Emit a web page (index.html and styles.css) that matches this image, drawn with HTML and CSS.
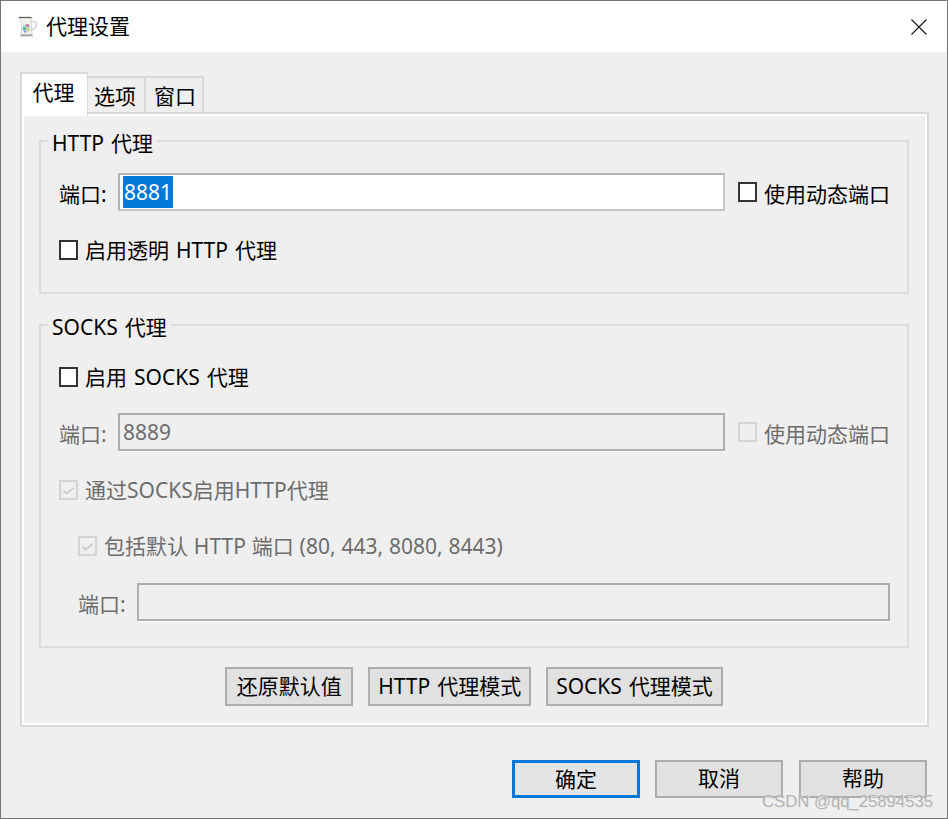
FILE: index.html
```html
<!DOCTYPE html>
<html lang="zh">
<head>
<meta charset="utf-8">
<title>代理设置</title>
<link rel="stylesheet" href="styles.css">
</head>
<body>
<div class="window">
  <header class="titlebar">
    <svg class="app-icon" viewBox="0 0 21 22" aria-hidden="true">
      <path d="M14 6c3-1.500 5.500-.5 5.500 2 0 3-3 5.500-6 7" fill="none" stroke="#d4d4d0" stroke-width="1.600"/>
      <path d="M2 1.500h12.500l-.5 4 1 13H4l1-11z" fill="#f4f4f0" stroke="#c4c4be" stroke-width=".7"/>
      <path d="M2 1.500h12.500" stroke="#5c5c56" stroke-width="1.300"/>
      <path d="M5.500 9.500l3-2 4 .5 1 6-3 3-4-1z" fill="#bfe3d8"/>
      <circle cx="10.500" cy="9.500" r="1.500" fill="#e0689a"/>
      <circle cx="7.500" cy="12.500" r="1.700" fill="#5fb08c"/>
      <circle cx="11" cy="14" r="1.300" fill="#e8cf5c"/>
      <circle cx="8" cy="15.500" r="1" fill="#6f8fd0"/>
      <path d="M4 18.500h11l1 1.500H3z" fill="#a8a8a2"/>
      <path d="M3 20.500h13" stroke="#dcdcd8" stroke-width="1"/>
    </svg>
    <span class="title-text">代理设置</span>
    <svg class="close-icon" viewBox="0 0 16 16" aria-hidden="true"><path d="M.5.500l15 15M15.500.500l-15 15" stroke="#111" stroke-width="1.100" fill="none"/></svg>
  </header>

  <main class="content">
    <div class="tabs">
      <div class="tab tab-active">代理</div>
      <div class="tab tab-mid">选项</div>
      <div class="tab tab-end">窗口</div>
    </div>
    <section class="pane">
      <fieldset class="group group-http">
        <legend>HTTP 代理</legend>
        <div class="row">
          <span class="label">端口:</span>
          <div class="input"><span class="selected">8881</span></div>
          <label class="check check-trail"><span class="box"></span>使用动态端口</label>
        </div>
        <div class="row row-after-input">
          <label class="check check-lead"><span class="box"></span>启用透明 HTTP 代理</label>
        </div>
      </fieldset>

      <fieldset class="group group-socks">
        <legend>SOCKS 代理</legend>
        <div class="row">
          <label class="check check-lead"><span class="box"></span>启用 SOCKS 代理</label>
        </div>
        <div class="row row-gap disabled">
          <span class="label">端口:</span>
          <div class="input input-off">8889</div>
          <label class="check check-trail"><span class="box box-off"></span>使用动态端口</label>
        </div>
        <div class="row row-after-input disabled">
          <label class="check check-lead"><span class="box box-off"><svg viewBox="0 0 15 15" class="tick"><path d="M2.500 8l3 3 7-5.500" fill="none" stroke="#c4c4c4" stroke-width="1.500"/></svg></span>通过SOCKS启用HTTP代理</label>
        </div>
        <div class="row row-next row-indent row-ports disabled">
          <label class="check check-lead"><span class="box box-off"><svg viewBox="0 0 15 15" class="tick"><path d="M2.500 8l3 3 7-5.500" fill="none" stroke="#c4c4c4" stroke-width="1.500"/></svg></span>包括默认 HTTP 端口 (80, 443, 8080, 8443)</label>
        </div>
        <div class="row row-next row-indent disabled">
          <span class="label">端口:</span>
          <div class="input input-off"></div>
        </div>
      </fieldset>

      <div class="pane-actions">
        <button class="btn btn-reset" type="button">还原默认值</button>
        <button class="btn" type="button">HTTP 代理模式</button>
        <button class="btn" type="button">SOCKS 代理模式</button>
      </div>
    </section>

    <footer class="dialog-actions">
      <button class="btn btn-wide btn-default" type="button">确定</button>
      <button class="btn btn-wide" type="button">取消</button>
      <button class="btn btn-wide" type="button">帮助</button>
    </footer>
    <div class="watermark">CSDN @qq_25894535</div>
  </main>
</div>
</body>
</html>
```

FILE: styles.css
```css
* { box-sizing: border-box; }

html, body {
  margin: 0;
  height: 819px;
  overflow: hidden;
}

body {
  font-family: "Noto Sans", "Noto Sans CJK SC", sans-serif;
  font-size: 21px;
  word-spacing: 1.5px;
  color: #000;
  background: #efefef;
}

.window {
  height: 819px;
  border: 1px solid #777;
  display: flex;
  flex-direction: column;
  background: #efefef;
}

.titlebar {
  height: 51px;
  flex: none;
  background: #fff;
  display: flex;
  align-items: center;
  padding: 0 20px 0 16px;
}

.app-icon {
  width: 21px;
  height: 22px;
  margin-right: 8px;
  flex: none;
}

.title-text {
  line-height: 51px;
}

.close-icon {
  width: 16px;
  height: 16px;
  margin-left: auto;
}

.content {
  position: relative;
  flex: 1;
  padding: 20px 18px 0 19px;
}

.tabs {
  display: flex;
  height: 44px;
  margin-bottom: -4px;
  position: relative;
  z-index: 1;
  align-items: flex-end;
}

.tab {
  width: 58px;
  height: 36px;
  margin-bottom: 4px;
  border: 2px solid #d9d9d9;
  border-bottom: 0;
  border-left-width: 0;
  background: #efefef;
  text-align: center;
  line-height: 36px;
}

.tab-mid { padding-right: 2px; }
.tab-end { padding-left: 2px; }

.tab-active {
  width: 68px;
  height: 44px;
  margin-bottom: 0;
  background: #fff;
  border-left-width: 2px;
  border-right-width: 1px;
  line-height: 36px;
  padding-right: 2px;
}

.pane {
  height: 615px;
  border: 2px solid #d9d9d9;
  box-shadow: inset 0 0 0 2px #fff;
  padding: 13px 18px 0 17px;
}

.group {
  margin: 0;
  padding: 18px 17px 23px 18px;
  border: 2px solid #dcdcdc;
  min-width: 0;
}

.group-socks {
  margin-top: 17px;
  padding-top: 19px;
  padding-bottom: 25px;
}

.group legend {
  margin-left: -11px;
  padding: 0 4px;
  line-height: 32px;
  height: 28px;
}

.row {
  height: 38px;
  display: flex;
  align-items: center;
}

.row-gap { margin-top: 17px; }
.row-after-input { margin-top: 20px; }
.row-next { margin-top: 18px; }
.row-indent { padding-left: 19px; }
.row-ports { word-spacing: .4px; }

.label {
  width: 59px;
  flex: none;
  padding-top: 1px;
}

.input {
  flex: 1;
  min-width: 0;
  height: 38px;
  padding-left: 3px;
  background: #fff;
  border: 2px solid #b4b4b8;
  border-bottom-color: #c6c6ca;
  border-right-color: #c6c6ca;
  line-height: 32px;
  display: flex;
  align-items: center;
}

.input-off {
  background: #efefef;
  border-color: #adadb0;
  box-shadow: 0 1px 0 #fff;
}

.selected {
  display: block;
  height: 32px;
  width: 50px;
  padding-left: 1px;
  background: #0078d7;
  color: #fff;
}

.check {
  display: flex;
  align-items: center;
  white-space: nowrap;
}

.check-trail {
  margin-left: 13px;
  padding-top: 2px;
}

.check-trail .box { margin-bottom: 2px; }

.check-lead { padding-bottom: 3px; }

.check-lead .box { margin-top: 3px; }

.box {
  width: 19px;
  height: 20px;
  flex: none;
  margin-right: 7px;
  background: #fff;
  border: 2px solid #333;
}

.box-off {
  background: #efefef;
  border-color: #d4d4d4;
  display: flex;
}

.tick {
  width: 15px;
  height: 16px;
}

.disabled { color: #6d6d6d; }

.pane-actions {
  display: flex;
  justify-content: center;
  gap: 15px;
  margin-top: 19px;
}

.btn {
  font: inherit;
  word-spacing: inherit;
  color: #000;
  height: 39px;
  padding: 0 8px 3px;
  background: #e1e1e1;
  border: 2px solid #adadad;
  border-radius: 0;
  white-space: nowrap;
}

.btn-reset {
  width: 128px;
  padding-left: 0;
  padding-right: 0;
}

.dialog-actions {
  display: flex;
  justify-content: flex-end;
  gap: 16px;
  margin-top: 33px;
  padding-right: 2px;
}

.btn-wide {
  width: 128px;
  height: 38px;
  padding-bottom: 5px;
}

.btn-default {
  margin-right: -1px;
  border: 3px solid #0078d7;
  background: #e3e4e6;
}

.watermark {
  position: absolute;
  right: 14px;
  bottom: 6px;
  font-family: "Liberation Sans", sans-serif;
  font-size: 16.7px;
  line-height: 20px;
  word-spacing: 0;
  color: #b4b4b4;
  text-shadow: 1px 1px 0 #e8e8e8;
}
```
